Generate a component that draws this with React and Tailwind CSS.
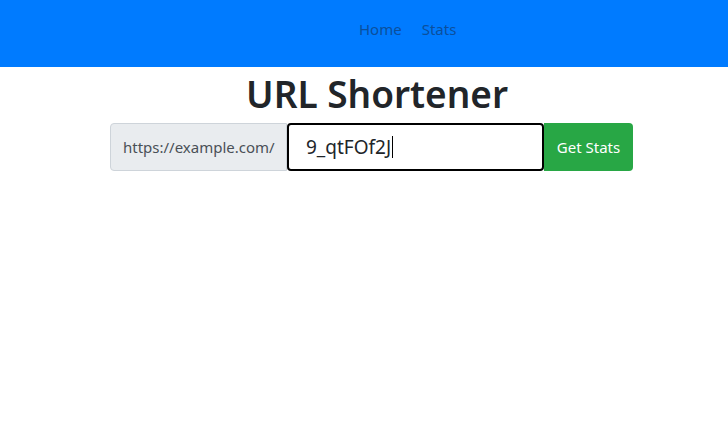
import React from 'react'

export default function App() {
  return (
    <div className="min-h-[444px] w-[728px] bg-white" style={{ fontFamily: '"Noto Sans", "Open Sans", sans-serif' }}>
      <nav className="h-[67px] bg-[#007bff] flex items-center pb-[8px] pl-[359px] gap-[20px]">
        <span className="text-[15px] text-[#0b4f9c]">Home</span>
        <span className="text-[15px] text-[#0b4f9c]">Stats</span>
      </nav>
      <div className="flex flex-col">
        <h1 className="pl-[246px] text-[37px] leading-[54px] font-semibold text-[#212529]">URL Shortener</h1>
        <div className="flex ml-[110px] mt-[2px] h-[48px] w-[523px]">
          <div className="w-[177px] flex items-center pl-[12px] bg-[#e9ecef] border border-[#ced4da] rounded-l-[4px] text-[15px] text-[#495057]">
            https://example.com/
          </div>
          <div className="w-[257px] flex items-center pl-[17px] border-2 border-black rounded-[4px] text-[19px] text-[#212529]">
            9_qtFOf2J<span className="inline-block w-px h-[22px] bg-black ml-[1px]"></span>
          </div>
          <button className="w-[89px] bg-[#28a745] text-white text-[15px] rounded-r-[4px]">Get Stats</button>
        </div>
      </div>
    </div>
  )
}
